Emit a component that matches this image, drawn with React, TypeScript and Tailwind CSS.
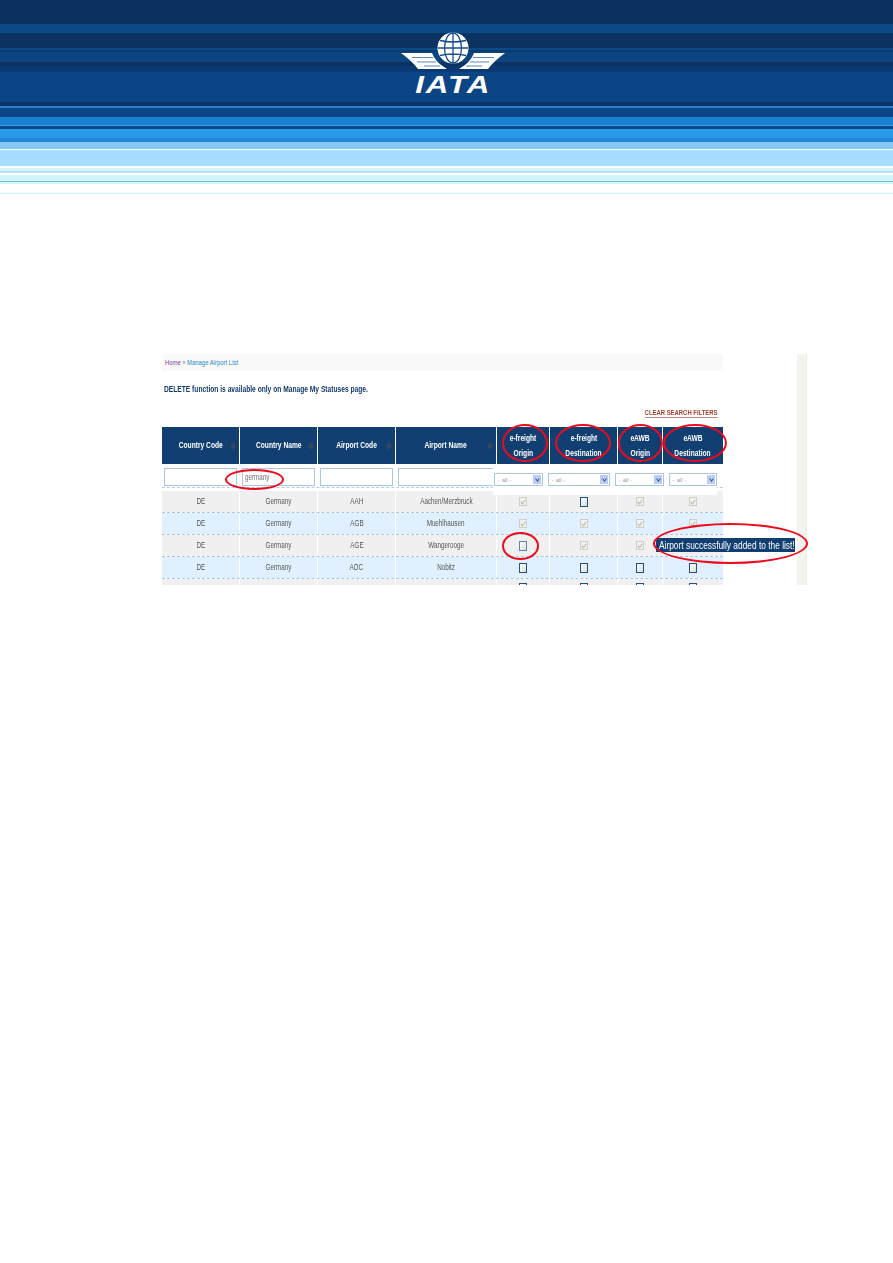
import type { ReactNode } from 'react'

const bands = [
  'h-[24px] bg-[#0b3060]',
  'h-[9px] bg-[#0c4a87]',
  'h-[15px] bg-[#0b3261]',
  'h-[2px] bg-[#0c4a87]',
  'h-[2px] bg-[#0a3a70]',
  'h-[10px] bg-[#0c4480]',
  'h-[4px] bg-[#0a3364]',
  'h-[6px] bg-[#0b3a72]',
  'h-[30px] bg-[#0c4585]',
  'h-[4px] bg-[#0a3468]',
  'h-[2px] bg-[#2a80c8]',
  'h-[9px] bg-[#0c4585]',
  'h-[8px] bg-[#1a80d0]',
  'h-[1px] bg-[#3f9ee0]',
  'h-[3px] bg-[#0c4a90]',
  'h-[9px] bg-[#2a9ae8]',
  'h-[4px] bg-[#1f88d8]',
  'h-[7px] bg-[#85c5f8]',
  'h-[1px] bg-white',
  'h-[16px] bg-[#a5dcff]',
  'h-[2px] bg-white',
  'h-[3px] bg-[#d8f2fd]',
  'h-[2px] bg-[#b8e0f8]',
  'h-[2px] bg-white',
  'h-[6px] bg-[#d0f6fb]',
  'h-[1px] bg-[#7fbcc8]',
  'h-[2px] bg-[#d0f6fb]',
  'h-[9px] bg-white',
  'h-[1px] bg-[#c8eef8]',
]

const gridCols = 'grid grid-cols-[77px_77px_77px_100px_52px_67px_44px_60px] gap-x-px'

type Col = { top: string; bottom?: string; sort?: boolean }

const columns: Col[] = [
  { top: 'Country Code', sort: true },
  { top: 'Country Name', sort: true },
  { top: 'Airport Code', sort: true },
  { top: 'Airport Name', sort: true },
  { top: 'e-freight', bottom: 'Origin' },
  { top: 'e-freight', bottom: 'Destination' },
  { top: 'eAWB', bottom: 'Origin' },
  { top: 'eAWB', bottom: 'Destination' },
]

const rows = [
  { country: 'DE', countryName: 'Germany', code: 'AAH', name: 'Aachen/Merzbruck', checks: [true, false, true, true] },
  { country: 'DE', countryName: 'Germany', code: 'AGB', name: 'Muehlhausen', checks: [true, true, true, true] },
  { country: 'DE', countryName: 'Germany', code: 'AGE', name: 'Wangerooge', checks: [false, true, true, true] },
  { country: 'DE', countryName: 'Germany', code: 'AOC', name: 'Nobitz', checks: [false, false, false, false] },
  // only the top few pixels of this row are in view
  { country: '', countryName: '', code: '', name: '', checks: [false, false, false, false] },
]

// the original shot is squeezed horizontally, so all its text runs narrow
function Narrow({ children, className = '' }: { children: ReactNode; className?: string }) {
  return <span className={`inline-block scale-x-[0.74] whitespace-nowrap ${className}`}>{children}</span>
}

function Logo() {
  return (
    <div className="absolute top-[32px] left-[400px] flex w-[106px] flex-col items-center">
      <svg width="106" height="42" viewBox="0 0 106 42">
        <circle cx="53" cy="16" r="15.5" fill="#fff" />
        <g fill="none" stroke="#174d8a" strokeWidth="1.3">
          <ellipse cx="53" cy="16" rx="8.5" ry="15" />
          <path d="M53 1v30M40 8.5q13 3 26 0M38 16h30M40 23.5q13-3 26 0" />
        </g>
        <path d="M1 21 L32 21 Q35 30 47 37 L18 37 Q12 29 1 21Z" fill="#fff" />
        <path d="M105 21 L74 21 Q71 30 59 37 L88 37 Q94 29 105 21Z" fill="#fff" />
        <g stroke="#5f86b5" strokeWidth="1.2" fill="none">
          <path d="M12 25.5 L33 25.5M17 30 L36 30M24 34 L40 34" />
          <path d="M94 25.5 L73 25.5M89 30 L70 30M82 34 L66 34" />
        </g>
      </svg>
      <div className="mt-[2px] scale-x-[1.3] text-[24px] leading-[17px] font-bold tracking-[1.5px] text-white italic">IATA</div>
    </div>
  )
}

function SortArrows() {
  return (
    <span className="absolute top-1/2 right-[3px] flex -translate-y-1/2 flex-col">
      <span className="h-0 w-0 border-x-[3px] border-b-[4px] border-x-transparent border-b-[#33475c]" />
      <span className="h-0 w-0 border-x-[3px] border-t-[4px] border-x-transparent border-t-[#33475c]" />
    </span>
  )
}

function Check({ on, faint }: { on: boolean; faint?: boolean }) {
  if (on) {
    return (
      <span className="flex h-[9px] w-[8px] items-center justify-center border border-[#cfcfc8] bg-[#f1f1ee]">
        <svg width="6" height="6" viewBox="0 0 6 6">
          <path d="M0.8 3 L2.5 4.8 L5.2 0.8" fill="none" stroke="#bcbcb4" strokeWidth="1.1" />
        </svg>
      </span>
    )
  }
  return (
    <span
      className={
        faint
          ? 'h-[10px] w-[8px] border border-[#5f86ab] bg-linear-to-br from-white to-[#dcdcd6]'
          : 'h-[10px] w-[8px] border border-[#1c5288] bg-linear-to-br from-white to-[#dcdcd6]'
      }
    />
  )
}

function Select({ className }: { className: string }) {
  return (
    <div className={`flex h-[13px] items-center justify-between border border-[#abc6e3] bg-white pr-px pl-[3px] ${className}`}>
      <span className="text-[6px] leading-none text-[#a0a0a0]">- all -</span>
      <span className="flex h-[9px] w-[8px] items-center justify-center bg-[#bccdf5]">
        <svg width="5" height="4" viewBox="0 0 5 4">
          <path d="M0.5 0.5 L2.5 3 L4.5 0.5" fill="none" stroke="#3c5a8c" strokeWidth="1.1" />
        </svg>
      </span>
    </div>
  )
}

function Oval({ className }: { className: string }) {
  return <div className={`absolute z-30 rounded-[50%] border-[2.5px] border-[#ee0a1c] ${className}`} />
}

export default function App() {
  return (
    <div className="relative min-h-[1263px] bg-white font-['Liberation_Sans',sans-serif]">
      <header className="relative flex flex-col">
        {bands.map((b, i) => (
          <div key={i} className={b} />
        ))}
        <Logo />
      </header>

      {/* embedded screenshot */}
      <div className="relative mt-[160px] ml-[162px] flex h-[231px] w-[645px] justify-between blur-[0.4px]">
        <div className="h-[231px] w-[561px] overflow-hidden">
          <div className="flex h-[17px] items-center bg-[#f9f9f9] pl-[3px] text-[8px] leading-none">
            <Narrow className="origin-left">
              <span className="text-[#7a3f98]">Home</span>
              <span className="mx-[2px] text-[#7a7a9a]">»</span>
              <span className="text-[#1c8ac6]">Manage Airport List</span>
            </Narrow>
          </div>
          <p className="mt-[13px] h-[10px] pl-[2px] text-[9px] leading-[10px] font-bold text-[#123a6b]">
            <Narrow className="origin-left">DELETE function is available only on Manage My Statuses page.</Narrow>
          </p>
          <div className="mt-[14px] flex h-[10px] justify-end pr-[5px]">
            <Narrow className="origin-right border-b border-[#c08a7e] text-[8px] leading-[10px] font-bold text-[#a5402e]">
              CLEAR SEARCH FILTERS
            </Narrow>
          </div>
          <div className={`mt-[9px] h-[37px] ${gridCols}`}>
            {columns.map((c, i) => (
              <div
                key={i}
                className="relative flex h-[37px] flex-col items-center justify-center gap-[6px] bg-[#123f72] text-[9px] leading-[9px] font-bold text-white"
              >
                <Narrow>{c.top}</Narrow>
                {c.bottom && <Narrow>{c.bottom}</Narrow>}
                {c.sort && <SortArrows />}
              </div>
            ))}
          </div>

          {/* filter row */}
          <div className="relative h-[24px] border-b border-dashed border-[#b4cde8]">
            <div className={gridCols}>
              <div className="px-[2px] pt-[4px]">
                <div className="h-[18px] border border-[#abc6e3]" />
              </div>
              <div className="px-[2px] pt-[4px]">
                <div className="flex h-[18px] items-center border border-[#abc6e3] pl-[2px] text-[8.5px] text-[#707070]">
                  <Narrow className="origin-left">germany</Narrow>
                </div>
              </div>
              <div className="px-[2px] pt-[4px]">
                <div className="h-[18px] border border-[#abc6e3]" />
              </div>
              <div className="pt-[4px] pl-[2px]">
                <div className="h-[18px] border border-[#abc6e3]" />
              </div>
            </div>
            <div className="absolute top-[3px] left-[331px] z-10 flex h-[28px] w-[224px] gap-[5px] bg-white pt-[6px] pl-[1px]">
              <Select className="w-[49px]" />
              <Select className="w-[62px]" />
              <Select className="w-[49px]" />
              <Select className="w-[48px]" />
            </div>
          </div>

          <div className="mt-[3px] flex flex-col">
            {rows.map((r, i) => (
              <div
                key={i}
                className={`${gridCols} h-[22px] border-b border-dashed border-[#a9c6e6] ${i === 4 ? 'pb-[3px]' : ''}`}
              >
                {[r.country, r.countryName, r.code, r.name].map((t, j) => (
                  <div
                    key={j}
                    className={`flex items-center justify-center text-[8.5px] text-[#555] ${i % 2 ? 'bg-[#e1f0fe]' : 'bg-[#f0f0f0]'}`}
                  >
                    <Narrow>{t}</Narrow>
                  </div>
                ))}
                {r.checks.map((on, j) => (
                  <div key={j} className={`flex items-center justify-center ${i % 2 ? 'bg-[#e1f0fe]' : 'bg-[#f0f0f0]'}`}>
                    <Check on={on} faint={i === 2 && j === 0} />
                  </div>
                ))}
              </div>
            ))}
          </div>
        </div>

        <div className="h-[231px] w-[10px] border-r border-[#ececec] bg-[#f4f3ee]" />

        <div className="absolute top-[184px] left-[494px] z-20 flex h-[14px] w-[139px] items-center bg-[#123f72] pl-[3px] text-[11px] leading-none text-white">
          <span className="inline-block origin-left scale-x-[0.76] whitespace-nowrap">Airport successfully added to the list!</span>
        </div>

        <Oval className="top-[115px] left-[63px] h-[21px] w-[59px]" />
        <Oval className="top-[70px] left-[340px] h-[38px] w-[46px]" />
        <Oval className="top-[70px] left-[393px] h-[38px] w-[56px]" />
        <Oval className="top-[70px] left-[456px] h-[38px] w-[45px]" />
        <Oval className="top-[70px] left-[501px] h-[38px] w-[64px]" />
        <Oval className="top-[178px] left-[340px] h-[28px] w-[37px]" />
        <Oval className="top-[169px] left-[491px] h-[41px] w-[155px]" />
      </div>
    </div>
  )
}
